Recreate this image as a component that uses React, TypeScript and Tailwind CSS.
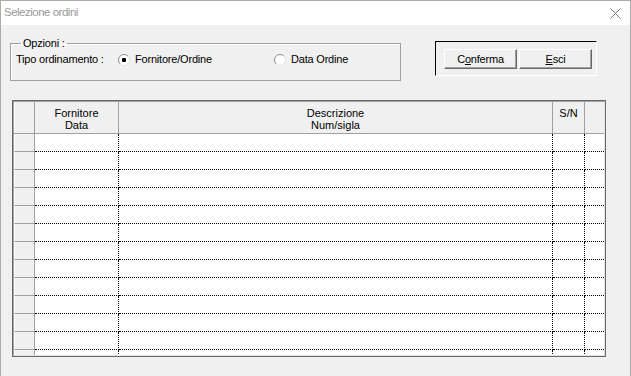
const COLS = [
  { w: "w-[84px]", top: "Fornitore", bottom: "Data" },
  { w: "w-[434px]", top: "Descrizione", bottom: "Num/sigla" },
  { w: "w-[32px]", top: "S/N", bottom: "" },
];

function Radio({ checked }: { checked?: boolean }) {
  return (
    <svg width="12" height="12" viewBox="0 0 12 12" className="shrink-0">
      <circle cx="6" cy="6" r="5.5" fill="white" />
      <path d="M2.1 9.9 A5.5 5.5 0 0 1 9.9 2.1" stroke="#8a8a8a" fill="none" />
      <path d="M9.9 2.1 A5.5 5.5 0 0 1 2.1 9.9" stroke="#e3e3e3" fill="none" />
      {checked && <rect x="4" y="4" width="4" height="4" rx="1" fill="black" />}
    </svg>
  );
}

function Button({ children }: { children: React.ReactNode }) {
  return (
    <button className="w-[73px] h-[20px] bg-[#f0f0f0] border border-t-white border-l-white border-b-[#696969] border-r-[#696969] shadow-[inset_-1px_-1px_0_#a0a0a0] flex items-center justify-center text-[11px] leading-none text-black">
      {children}
    </button>
  );
}

function HeaderRow() {
  return (
    <div className="flex h-[32px] shrink-0 border-b border-[#a0a0a0] bg-[#f0f0f0]">
      <div className="w-[21px] shrink-0 border-l border-l-white border-r border-r-[#a0a0a0]" />
      {COLS.map((c) => (
        <div
          key={c.top}
          className={`${c.w} shrink-0 border-r border-[#a0a0a0] pt-[5px] text-center text-[11px] leading-[12px]`}
        >
          <div>{c.top}</div>
          <div>{c.bottom}</div>
        </div>
      ))}
      <div className="flex-1" />
    </div>
  );
}

function DataRow() {
  return (
    <div className="flex h-[18px] shrink-0">
      <div className="w-[21px] shrink-0 bg-[#f0f0f0] border-l border-l-white border-r border-r-[#a0a0a0] border-b border-b-[#a0a0a0]" />
      {COLS.map((c) => (
        <div
          key={c.top}
          className={`${c.w} shrink-0 bg-white border-r border-b border-dotted border-black`}
        />
      ))}
      <div className="flex-1 bg-white border-b border-dotted border-black" />
    </div>
  );
}

export default function App() {
  return (
    <div className="w-[631px] h-[376px] bg-[#f0f0f0] border-l border-r border-t border-[#ababab] flex flex-col overflow-hidden font-['Liberation_Sans',Arial,sans-serif] text-black">
      <div className="h-[24px] shrink-0 bg-white flex items-center justify-between pl-[3px] pr-[9px]">
        <span className="text-[11.5px] tracking-[-0.5px] text-[#9a9a9a]">Selezione ordini</span>
        <svg width="11" height="11" viewBox="0 0 11 11">
          <path d="M0.5 0.5 L10.5 10.5 M10.5 0.5 L0.5 10.5" stroke="#7a7a7a" strokeWidth="1" />
        </svg>
      </div>

      <div className="flex items-start mt-[12px] ml-[9px] text-[11px] tracking-[-0.2px]">
        <fieldset className="w-[391px] h-[44px] border border-[#a0a0a0] shadow-[inset_1px_1px_0_white] px-[5px]">
          <legend className="ml-[5px] px-[2px] leading-[13px]">Opzioni :</legend>
          <div className="flex items-center h-[13px] mt-[3px]">
            <span className="w-[102px] shrink-0">Tipo ordinamento :</span>
            <label className="w-[156px] shrink-0 flex items-center gap-[5px]">
              <Radio checked />
              <span>Fornitore/Ordine</span>
            </label>
            <label className="flex items-center gap-[5px]">
              <Radio />
              <span>Data Ordine</span>
            </label>
          </div>
        </fieldset>

        <div className="ml-[34px] mt-[4px] w-[162px] h-[35px] border border-t-black border-l-black border-b-white border-r-white pl-[8px] pt-[7px] flex gap-[2px]">
          <Button>
            C<span className="underline">o</span>nferma
          </Button>
          <Button>
            <span className="underline">E</span>sci
          </Button>
        </div>
      </div>

      <div className="mt-[19px] ml-[11px] w-[594px] h-[257px] border border-[#696969] shrink-0">
        <div className="h-full border border-t-[#a0a0a0] border-l-[#a0a0a0] border-b-[#e3e3e3] border-r-[#e3e3e3] flex flex-col overflow-hidden">
          <HeaderRow />
          {Array.from({ length: 13 }, (_, i) => (
            <DataRow key={i} />
          ))}
        </div>
      </div>
    </div>
  );
}
